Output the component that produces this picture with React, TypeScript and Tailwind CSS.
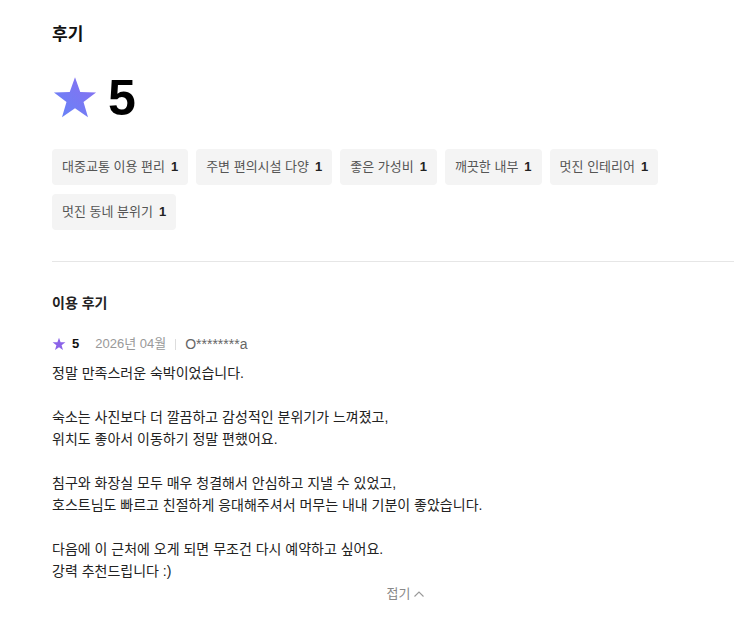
import React from "react";

const FONT = { fontFamily: '"Liberation Sans", "Noto Sans CJK KR", sans-serif' };

function BigStar() {
  return (
    <svg width="46" height="44" viewBox="0 0 24 23" className="block">
      <defs>
        <linearGradient id="bigstar" x1="1" y1="0" x2="0" y2="1">
          <stop offset="0" stopColor="#8a6ef0" />
          <stop offset="1" stopColor="#6585f8" />
        </linearGradient>
      </defs>
      <path
        d="M12 0.6 L14.75 8.4 L23 8.6 L16.45 13.65 L18.8 21.6 L12 16.9 L5.2 21.6 L7.55 13.65 L1 8.6 L9.25 8.4 Z"
        fill="url(#bigstar)"
      />
    </svg>
  );
}

function SmallStar() {
  return (
    <svg width="14" height="14" viewBox="0 0 24 23" className="block">
      <path
        d="M12 0.6 L14.75 8.4 L23 8.6 L16.45 13.65 L18.8 21.6 L12 16.9 L5.2 21.6 L7.55 13.65 L1 8.6 L9.25 8.4 Z"
        fill="#8b63e8"
      />
    </svg>
  );
}

const tags = [
  "대중교통 이용 편리",
  "주변 편의시설 다양",
  "좋은 가성비",
  "깨끗한 내부",
  "멋진 인테리어",
  "멋진 동네 분위기",
];

const body = [
  "정말 만족스러운 숙박이었습니다.",
  "",
  "숙소는 사진보다 더 깔끔하고 감성적인 분위기가 느껴졌고,",
  "위치도 좋아서 이동하기 정말 편했어요.",
  "",
  "침구와 화장실 모두 매우 청결해서 안심하고 지낼 수 있었고,",
  "호스트님도 빠르고 친절하게 응대해주셔서 머무는 내내 기분이 좋았습니다.",
  "",
  "다음에 이 근처에 오게 되면 무조건 다시 예약하고 싶어요.",
  "강력 추천드립니다 :)",
];

export default function App() {
  return (
    <div className="w-[734px] h-[618px] overflow-hidden bg-white" style={FONT}>
      <div className="w-[760px] pl-[52px] pt-[22px]">
        <h2 className="text-[17px] leading-[26px] font-bold text-[#111]">후기</h2>

        <div className="mt-[26px] flex items-center gap-[10px] h-[48px]">
          <BigStar />
          <span className="text-[50px] leading-none font-bold text-black">5</span>
        </div>

        <div className="mt-[27px] flex flex-wrap gap-x-2 gap-y-[9px] w-[706px]">
          {tags.map((t) => (
            <div
              key={t}
              className="h-[36px] flex items-center px-[10px] rounded-[4px] bg-[#f4f4f4] text-[13px] text-[#555]"
            >
              <span>{t}</span>
              <span className="ml-[6px] font-bold text-[#222] text-[13px]">1</span>
            </div>
          ))}
        </div>

        <div className="mt-[31px] h-px bg-[#e6e6e6] w-[700px]" />

        <h3 className="mt-[30px] text-[14px] leading-[22px] font-bold text-[#222]">이용 후기</h3>

        <div className="mt-[20px] flex items-center h-[20px] text-[13px]">
          <SmallStar />
          <span className="ml-[6px] font-bold text-[13px] text-[#111]">5</span>
          <span className="ml-[16px] text-[#999]">2026년 04월</span>
          <span className="mx-[9px] w-px h-[11px] bg-[#dddddd]" />
          <span className="text-[#666] text-[14px]">O********a</span>
        </div>

        <div className="mt-[8px] text-[14px] leading-[22px] text-[#222]">
          {body.map((l, i) => (
            <div key={i} className="h-[22px]">
              {l}
            </div>
          ))}
        </div>

        <div className="mt-[2px] flex justify-center w-[708px]">
          <button className="flex items-center gap-[3px] text-[13px] leading-[20px] text-[#888]">
            <span>접기</span>
            <svg width="12" height="12" viewBox="0 0 12 12" fill="none">
              <path d="M1.5 8.5 L6 4 L10.5 8.5" stroke="#999" strokeWidth="1.1" />
            </svg>
          </button>
        </div>
      </div>
    </div>
  );
}
